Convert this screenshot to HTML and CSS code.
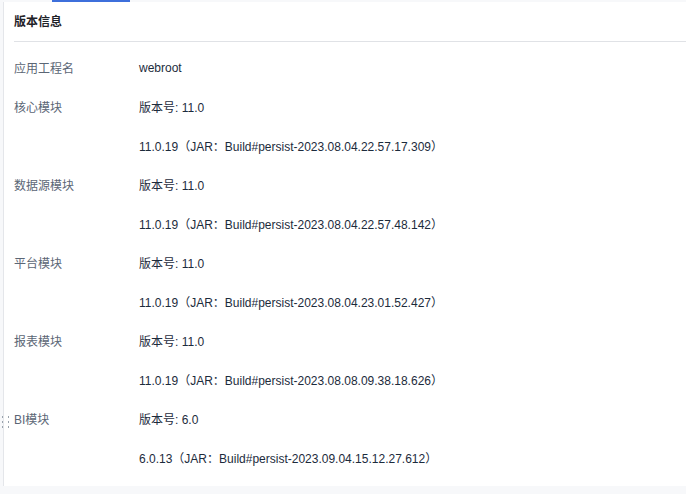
FILE: index.html
```html
<!DOCTYPE html>
<html lang="zh-CN">
<head>
<meta charset="utf-8">
<title>版本信息</title>
<link rel="stylesheet" href="styles.css">
</head>
<body>
<div class="tabstrip"><div class="tab-ink"></div></div>
<div class="panel">
  <div class="title">版本信息</div>
  <div class="list">
    <div class="row"><div class="label">应用工程名</div><div class="value">webroot</div></div>
    <div class="row"><div class="label">核心模块</div><div class="value">版本号: 11.0</div></div>
    <div class="row"><div class="label"></div><div class="value">11.0.19（JAR：Build#persist-2023.08.04.22.57.17.309）</div></div>
    <div class="row"><div class="label">数据源模块</div><div class="value">版本号: 11.0</div></div>
    <div class="row"><div class="label"></div><div class="value">11.0.19（JAR：Build#persist-2023.08.04.22.57.48.142）</div></div>
    <div class="row"><div class="label">平台模块</div><div class="value">版本号: 11.0</div></div>
    <div class="row"><div class="label"></div><div class="value">11.0.19（JAR：Build#persist-2023.08.04.23.01.52.427）</div></div>
    <div class="row"><div class="label">报表模块</div><div class="value">版本号: 11.0</div></div>
    <div class="row"><div class="label"></div><div class="value">11.0.19（JAR：Build#persist-2023.08.08.09.38.18.626）</div></div>
    <div class="row"><div class="label">BI模块</div><div class="value">版本号: 6.0</div></div>
    <div class="row"><div class="label"></div><div class="value">6.0.13（JAR：Build#persist-2023.09.04.15.12.27.612）</div></div>
  </div>
</div>
<svg class="handle" width="10" height="16" viewBox="0 0 10 16">
  <g fill="#9aa3ad">
    <rect x="2" y="1" width="1" height="2"/><rect x="2" y="6" width="1" height="2"/><rect x="2" y="11" width="1" height="2"/>
    <rect x="8" y="1" width="1" height="2"/><rect x="8" y="6" width="1" height="2"/><rect x="8" y="11" width="1" height="2"/>
  </g>
</svg>
</body>
</html>
```
FILE: styles.css
```css
html, body {
  margin: 0;
  padding: 0;
  background: #f7f8fa;
  font-family: "Liberation Sans", "Noto Sans CJK SC", sans-serif;
  font-size: 12px;
}
body {
  width: 686px;
  height: 494px;
  overflow: hidden;
  position: relative;
}
.tabstrip {
  height: 2px;
}
.tab-ink {
  margin-left: 52px;
  width: 78px;
  height: 2px;
  background: #3d6fdb;
}
.panel {
  margin-left: 3px;
  border-left: 1px solid #e4e6ea;
  background: #ffffff;
  height: 484px;
  padding-left: 10px;
  box-sizing: border-box;
}
.title {
  height: 39px;
  line-height: 40px;
  font-weight: bold;
  color: #1f2329;
  border-bottom: 1px solid #e0e2e6;
}
.list {
  padding-top: 6px;
}
.row {
  display: flex;
  height: 39px;
  align-items: center;
}
.label {
  width: 125px;
  color: #5b6675;
}
.value {
  color: #1c2b3c;
}
.handle {
  position: absolute;
  left: 0;
  top: 415px;
}
```
